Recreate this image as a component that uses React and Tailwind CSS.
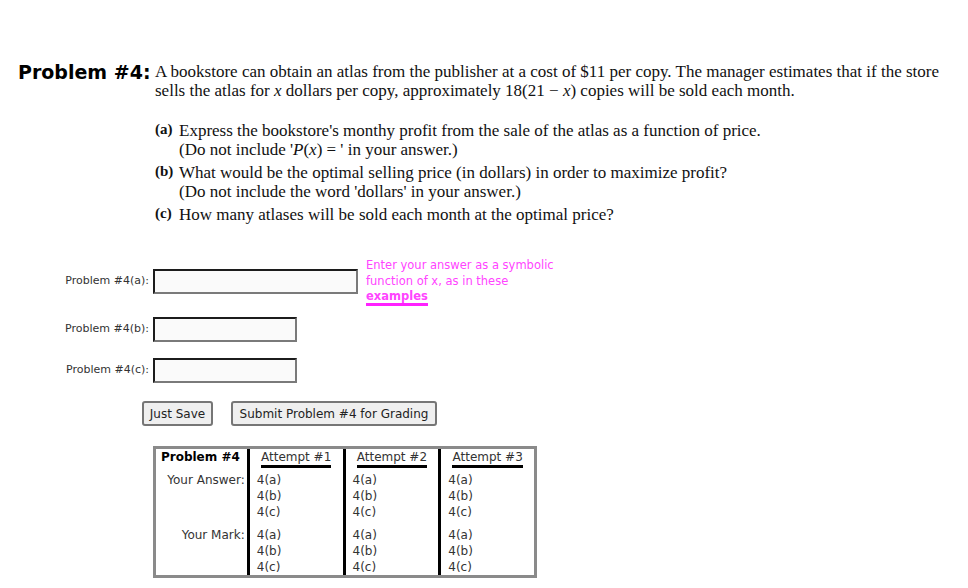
import React from 'react';

const sans = "font-['DejaVu_Sans',Verdana,sans-serif]";
const serif = "font-['Liberation_Serif','Times_New_Roman',serif]";

const Part = ({ label, children }) => (
  <div className="flex">
    <span className="w-[24px] shrink-0 text-[15px] font-bold leading-[17px]">{label}</span>
    <div className="flex flex-col">{children}</div>
  </div>
);

const Field = ({ label, wide }) => (
  <div className="flex items-center">
    <label className={`${sans} w-[153px] shrink-0 pr-[4px] text-right text-[11px] text-[#333]`}>{label}</label>
    <input
      type="text"
      className={`${wide ? 'w-[205px]' : 'w-[144px]'} h-[25px] border-2 border-t-[#1c1c1c] border-l-[#1c1c1c] border-b-[#7a7a7a] border-r-[#7a7a7a] bg-[#fafafa] outline-none`}
    />
  </div>
);

const Lines = () => (
  <div className="flex flex-col">
    <span>4(a)</span>
    <span>4(b)</span>
    <span>4(c)</span>
  </div>
);

const AttemptCol = ({ n }) => (
  <div className="flex w-[96px] flex-col border-l-[3px] border-black pl-[7px]">
    <div className="flex h-[23px] justify-center pr-[7px]">
      <span className="h-[19px] border-b-[3px] border-black leading-[16px]">Attempt #{n}</span>
    </div>
    <Lines />
    <div className="h-[7px]" />
    <Lines />
  </div>
);

export default function App() {
  return (
    <div className="h-[588px] w-[968px] overflow-hidden bg-white text-black">
      <div className="pt-[62px]">
        <div className="flex items-start">
          <h2 className={`${sans} w-[155px] shrink-0 pl-[18px] text-[19px] font-bold leading-[20px] whitespace-nowrap`}>
            Problem #4:
          </h2>
          <div className={`${serif} text-[17px] leading-[19px] text-[#111] whitespace-nowrap`}>
            <p>A bookstore can obtain an atlas from the publisher at a cost of $11 per copy. The manager estimates that if the store</p>
            <p>
              sells the atlas for <i>x</i> dollars per copy, approximately 18(21 &minus; <i>x</i>) copies will be sold each month.
            </p>
            <div className="mt-[21px] flex flex-col gap-[4px]">
              <Part label="(a)">
                <span>Express the bookstore's monthy profit from the sale of the atlas as a function of price.</span>
                <span>(Do not include '<i>P</i>(<i>x</i>) = ' in your answer.)</span>
              </Part>
              <Part label="(b)">
                <span>What would be the optimal selling price (in dollars) in order to maximize profit?</span>
                <span>(Do not include the word 'dollars' in your answer.)</span>
              </Part>
              <Part label="(c)">
                <span>How many atlases will be sold each month at the optimal price?</span>
              </Part>
            </div>
          </div>
        </div>
      </div>

      <div className={`${sans} mt-[33px] flex items-center`}>
        <Field label="Problem #4(a):" wide />
        <div className="ml-[8px] flex flex-col text-[11.5px] leading-[16px] text-[#ff44ff]">
          <span>Enter your answer as a symbolic</span>
          <span>function of x, as in these</span>
          <a href="#" className="self-start border-b-[3px] border-[#ff22ff] font-bold leading-[14px]">examples</a>
        </div>
      </div>
      <div className="mt-[11px]">
        <Field label="Problem #4(b):" />
      </div>
      <div className="mt-[16px]">
        <Field label="Problem #4(c):" />
      </div>

      <div className={`${sans} ml-[142px] mt-[18px] flex gap-[18px] text-[12px] text-[#222]`}>
        <button className="h-[25px] w-[71px] rounded-[3px] border-2 border-[#767676] bg-[#efefef]">Just Save</button>
        <button className="h-[25px] w-[206px] rounded-[3px] border-2 border-[#767676] bg-[#efefef]">Submit Problem #4 for Grading</button>
      </div>

      <div className={`${sans} ml-[153px] mt-[20px] flex w-[384px] border-[3px] border-[#8a8a8a] text-[12px] leading-[16px] text-[#333]`}>
        <div className="flex w-[91px] flex-col pr-[2px]">
          <div className="h-[23px] text-center font-bold text-black">Problem #4</div>
          <span className="text-right">Your Answer:</span>
          <div className="h-[39px]" />
          <span className="text-right">Your Mark:</span>
        </div>
        <AttemptCol n={1} />
        <AttemptCol n={2} />
        <AttemptCol n={3} />
      </div>
    </div>
  );
}
